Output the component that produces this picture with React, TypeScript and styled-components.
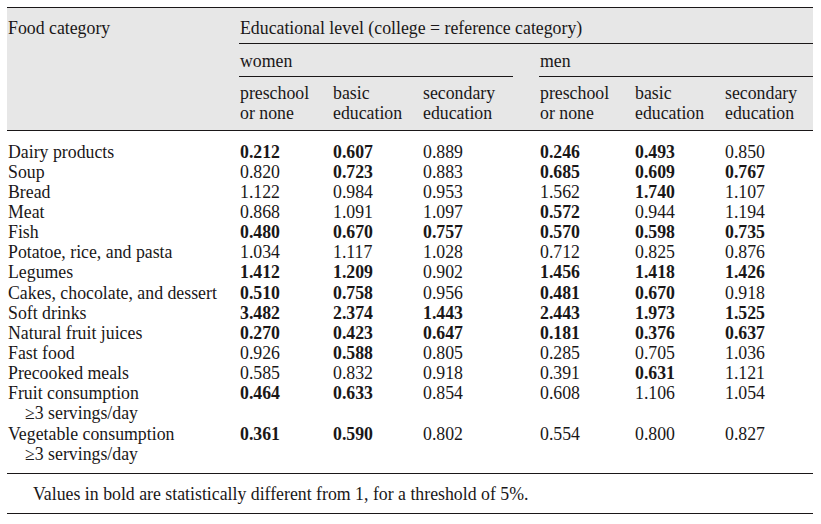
import React from "react";
import styled, { createGlobalStyle } from "styled-components";

const GlobalStyle = createGlobalStyle`
  html, body {
    margin: 0;
    padding: 0;
    background: #ffffff;
  }
  body {
    font-family: "Liberation Serif", "Times New Roman", serif;
    color: #1a1718;
  }
`;

type Cell = [string, boolean];
type Row = { label: string; sub?: string; women: Cell[]; men: Cell[] };

const b = (v: string): Cell => [v, true];
const n = (v: string): Cell => [v, false];

const rows: Row[] = [
  { label: "Dairy products", women: [b("0.212"), b("0.607"), n("0.889")], men: [b("0.246"), b("0.493"), n("0.850")] },
  { label: "Soup", women: [n("0.820"), b("0.723"), n("0.883")], men: [b("0.685"), b("0.609"), b("0.767")] },
  { label: "Bread", women: [n("1.122"), n("0.984"), n("0.953")], men: [n("1.562"), b("1.740"), n("1.107")] },
  { label: "Meat", women: [n("0.868"), n("1.091"), n("1.097")], men: [b("0.572"), n("0.944"), n("1.194")] },
  { label: "Fish", women: [b("0.480"), b("0.670"), b("0.757")], men: [b("0.570"), b("0.598"), b("0.735")] },
  { label: "Potatoe, rice, and pasta", women: [n("1.034"), n("1.117"), n("1.028")], men: [n("0.712"), n("0.825"), n("0.876")] },
  { label: "Legumes", women: [b("1.412"), b("1.209"), n("0.902")], men: [b("1.456"), b("1.418"), b("1.426")] },
  { label: "Cakes, chocolate, and dessert", women: [b("0.510"), b("0.758"), n("0.956")], men: [b("0.481"), b("0.670"), n("0.918")] },
  { label: "Soft drinks", women: [b("3.482"), b("2.374"), b("1.443")], men: [b("2.443"), b("1.973"), b("1.525")] },
  { label: "Natural fruit juices", women: [b("0.270"), b("0.423"), b("0.647")], men: [b("0.181"), b("0.376"), b("0.637")] },
  { label: "Fast food", women: [n("0.926"), b("0.588"), n("0.805")], men: [n("0.285"), n("0.705"), n("1.036")] },
  { label: "Precooked meals", women: [n("0.585"), n("0.832"), n("0.918")], men: [n("0.391"), b("0.631"), n("1.121")] },
  { label: "Fruit consumption", sub: "≥3 servings/day", women: [b("0.464"), b("0.633"), n("0.854")], men: [n("0.608"), n("1.106"), n("1.054")] },
  { label: "Vegetable consumption", sub: "≥3 servings/day", women: [b("0.361"), b("0.590"), n("0.802")], men: [n("0.554"), n("0.800"), n("0.827")] },
];

const levels = [
  ["preschool", "or none"],
  ["basic", "education"],
  ["secondary", "education"],
];

export default function App() {
  return (
    <>
      <GlobalStyle />
      <Page>
        <Table>
          <colgroup>
            <col style={{ width: 232 }} />
            <col style={{ width: 93 }} />
            <col style={{ width: 90 }} />
            <col style={{ width: 91 }} />
            <col style={{ width: 26 }} />
            <col style={{ width: 95 }} />
            <col style={{ width: 90 }} />
            <col style={{ width: 89 }} />
          </colgroup>
          <Head>
            <tr>
              <HeadCell rowSpan={3} $pad="10px 0 0 1px">Food category</HeadCell>
              <HeadCell colSpan={7} $pad="10px 0 5px 1px" $ruled>
                Educational level (college = reference category)
              </HeadCell>
            </tr>
            <tr>
              <HeadCell colSpan={3} $pad="7px 0 5px 1px" $ruled>women</HeadCell>
              <HeadCell />
              <HeadCell colSpan={3} $pad="7px 0 5px 1px" $ruled>men</HeadCell>
            </tr>
            <tr>
              {levels.map((l) => (
                <HeadCell key={"w" + l[1] + l[0]} $pad="6px 0 6px 1px">
                  {l[0]}
                  <br />
                  {l[1]}
                </HeadCell>
              ))}
              <HeadCell />
              {levels.map((l) => (
                <HeadCell key={"m" + l[1] + l[0]} $pad="6px 0 6px 1px">
                  {l[0]}
                  <br />
                  {l[1]}
                </HeadCell>
              ))}
            </tr>
          </Head>
          <Body>
            {rows.map((r, i) => (
              <BodyRow key={r.label} $first={i === 0} $last={i === rows.length - 1}>
                <LabelCell>
                  {r.label}
                  {r.sub && <Sub>{r.sub}</Sub>}
                </LabelCell>
                {r.women.map(([v, bold], j) => (
                  <ValueCell key={"w" + j} $bold={bold}>{v}</ValueCell>
                ))}
                <ValueCell />
                {r.men.map(([v, bold], j) => (
                  <ValueCell key={"m" + j} $bold={bold}>{v}</ValueCell>
                ))}
              </BodyRow>
            ))}
          </Body>
        </Table>
        <Footnote>Values in bold are statistically different from 1, for a threshold of 5%.</Footnote>
      </Page>
    </>
  );
}

const Page = styled.div`
  width: 806px;
  padding: 7px 0 0 7px;
  font-size: 17.8px;
  line-height: 20.14px;
`;

const Table = styled.table`
  width: 806px;
  border-collapse: collapse;
  table-layout: fixed;
  border-top: 1.5px solid #1a1718;
  border-bottom: 1.5px solid #1a1718;
`;

const Head = styled.thead`
  background: #e7e7e7;
  border-bottom: 1.5px solid #1a1718;
`;

const HeadCell = styled.th<{ $pad?: string; $ruled?: boolean }>`
  font-weight: normal;
  text-align: left;
  vertical-align: top;
  padding: ${({ $pad }) => $pad || "0"};
  border-bottom: ${({ $ruled }) => ($ruled ? "1.5px solid #1a1718" : "none")};
  white-space: nowrap;
`;

const Body = styled.tbody``;

const BodyRow = styled.tr<{ $first?: boolean; $last?: boolean }>`
  & > td {
    padding-top: ${({ $first }) => ($first ? "11px" : "0")};
    padding-bottom: ${({ $last }) => ($last ? "9px" : "0")};
  }
`;

const LabelCell = styled.td`
  padding-left: 1px;
  vertical-align: top;
  white-space: nowrap;
`;

const Sub = styled.div`
  padding-left: 17px;
`;

const ValueCell = styled.td<{ $bold?: boolean }>`
  vertical-align: top;
  padding-left: 1px;
  font-weight: ${({ $bold }) => ($bold ? "bold" : "normal")};
`;

const Footnote = styled.div`
  padding: 10px 0 9px 26px;
  border-bottom: 1.5px solid #1a1718;
`;
